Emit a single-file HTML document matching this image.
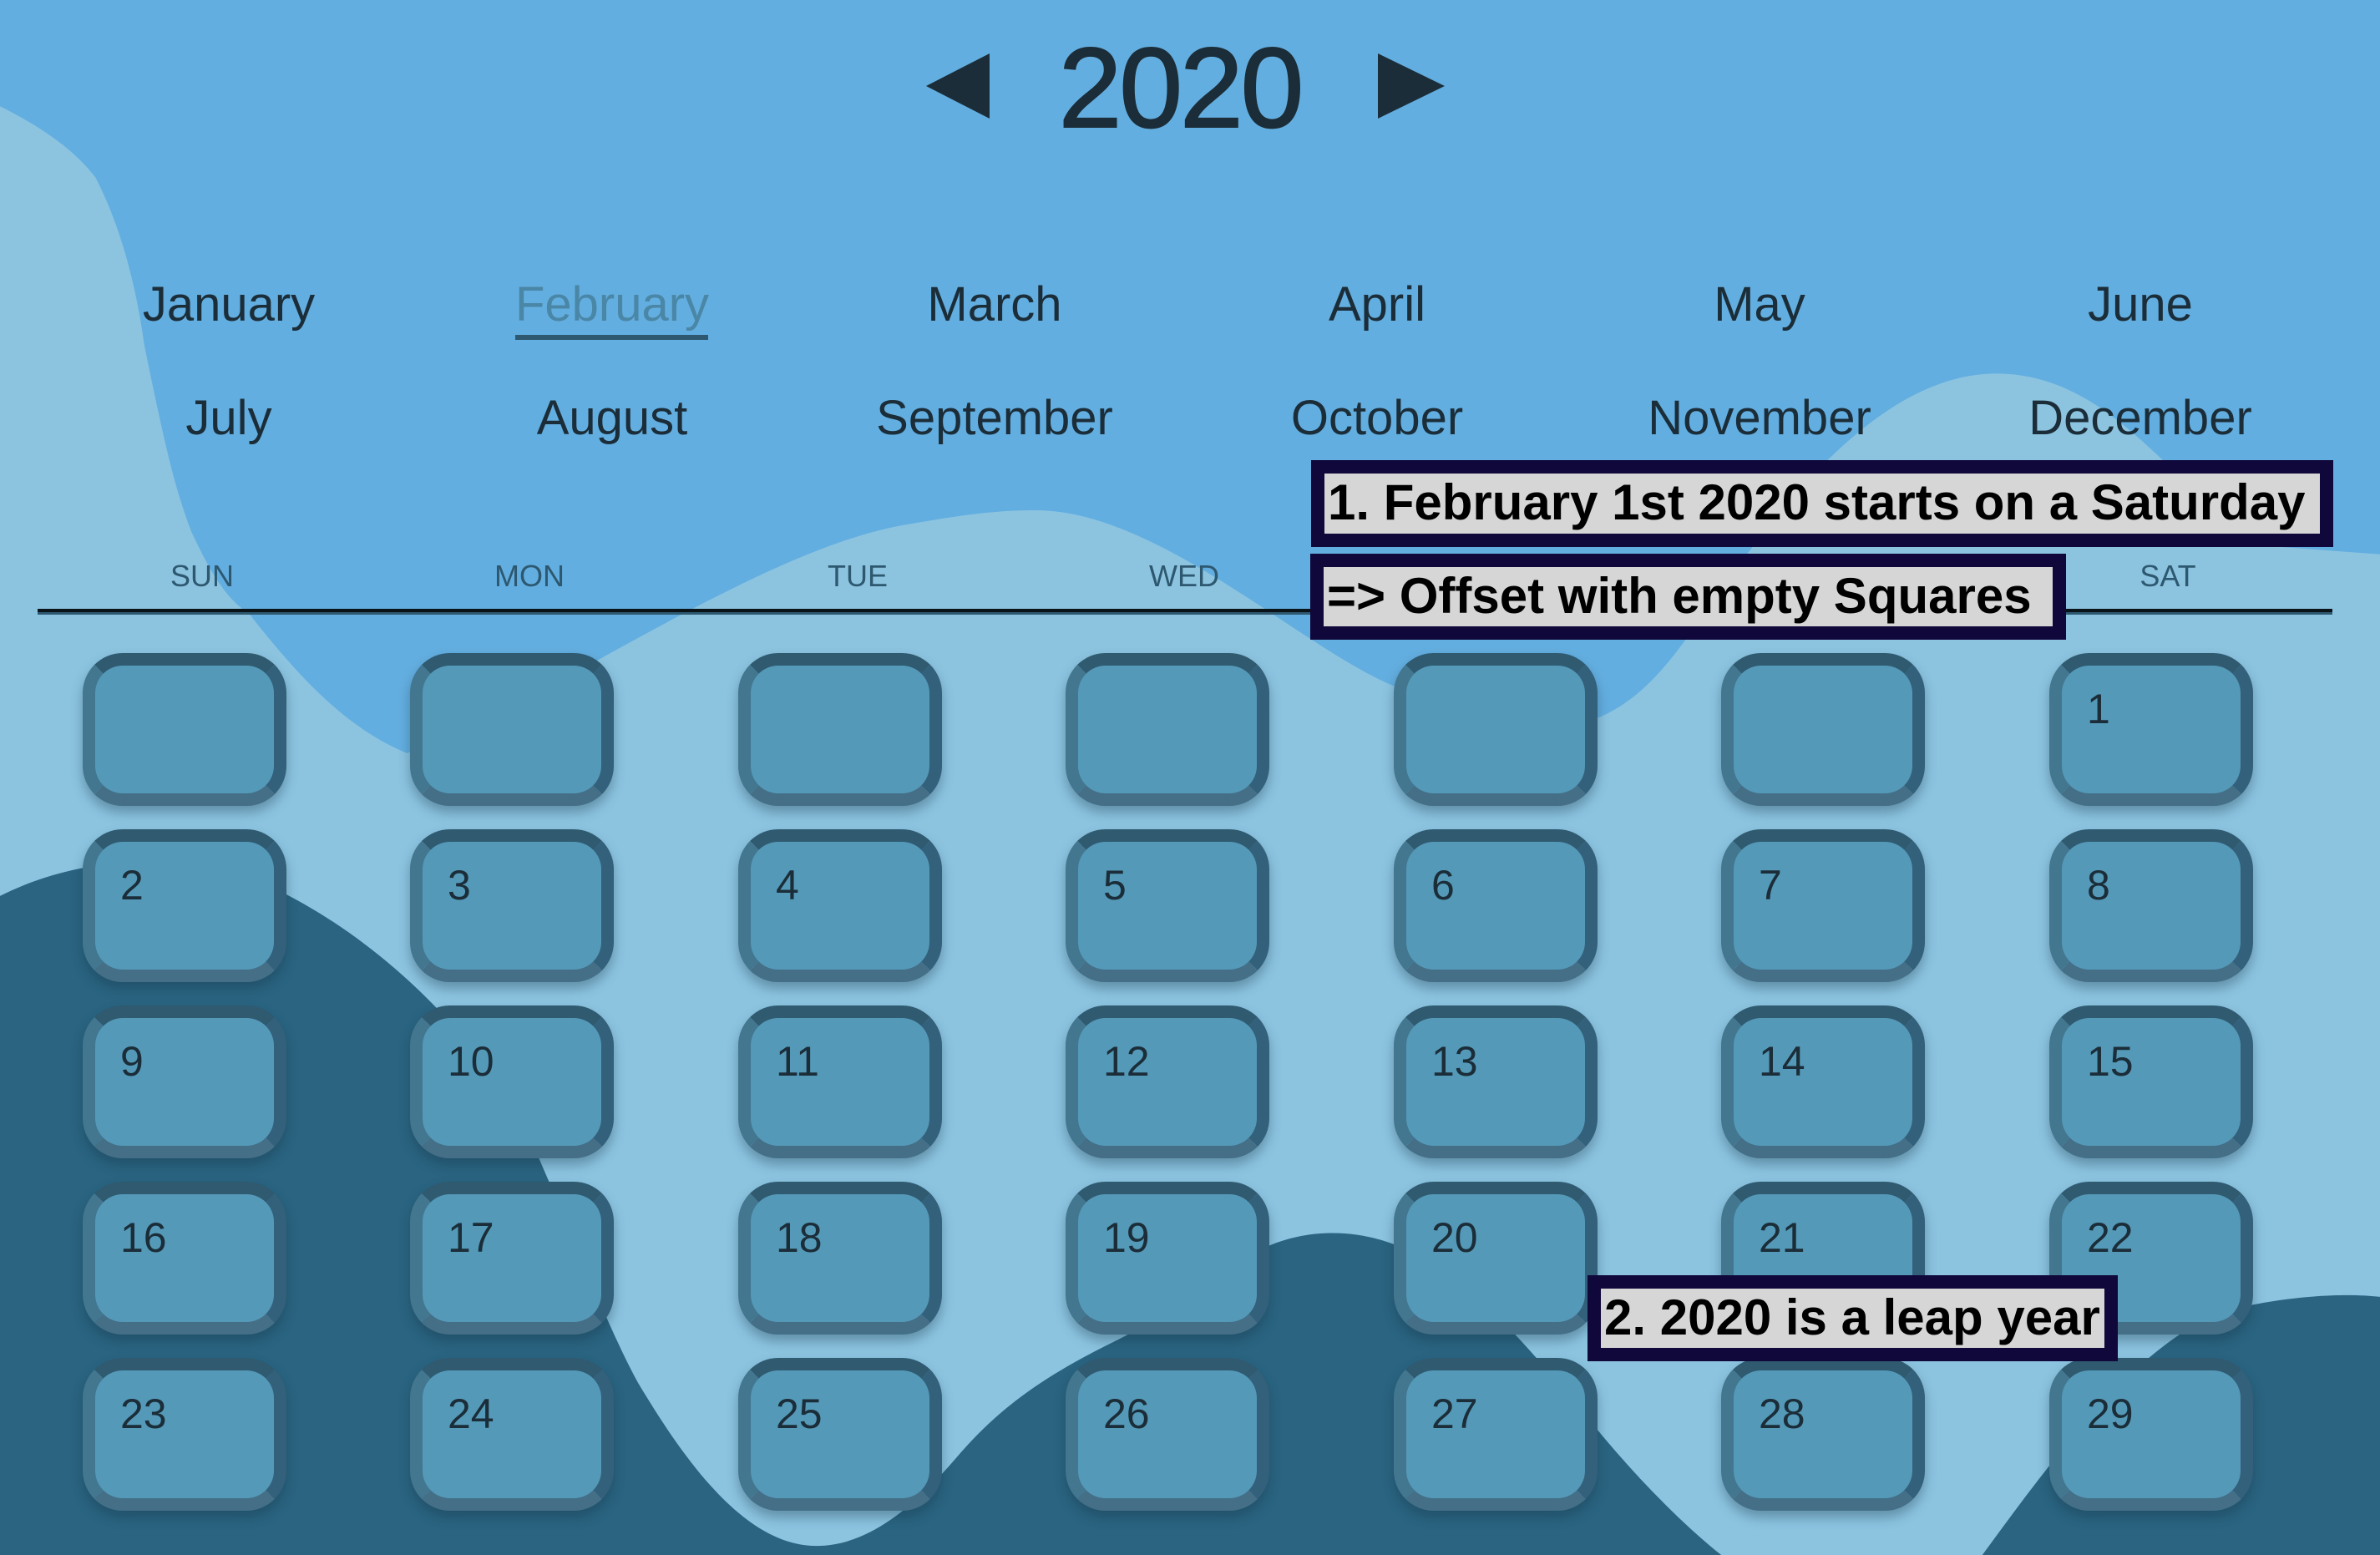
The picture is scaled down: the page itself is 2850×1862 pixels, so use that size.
<!DOCTYPE html>
<html><head><meta charset="utf-8"><style>
*{margin:0;padding:0;box-sizing:border-box}
html,body{width:2850px;height:1862px;overflow:hidden;background:#63aee0;font-family:"Liberation Sans",Arial,sans-serif}
#bg{position:absolute;left:0;top:0;width:2850px;height:1862px}
.abs{position:absolute}
.year{left:-12px;width:2850px;top:30px;text-align:center;font-size:136px;color:#1b2d38;line-height:150px;letter-spacing:-3px;-webkit-text-stroke:2px #1b2d38}
.m{position:absolute;width:400px;margin-left:-200px;text-align:center;font-size:58px;color:#1b2d38;line-height:70px}
.d{position:absolute;width:200px;margin-left:-100px;text-align:center;font-size:36px;color:#2d5870;line-height:40px}
.c{position:absolute;width:244px;height:183px;border-radius:48px;border:15px solid #3a657b;
 border-left-color:#43768f;border-bottom-color:#446f87;border-right-color:#33607a;border-top-color:#2f5a70;
 background:#5499b8;box-shadow:0 8px 14px rgba(20,50,70,.35);font-size:50px;color:#1b2d38;padding:24px 0 0 30px;line-height:56px}
.note{position:absolute;background:#d6d6d6;border:16px solid #10073a;font-weight:bold;color:#000;white-space:nowrap;line-height:70px;padding:0 4px;font-size:60px;overflow:hidden}
</style></head><body>
<svg id="bg" viewBox="0 0 1568 1024" preserveAspectRatio="none">
<path fill="#8cc4e0" d="M0,70 C30,85 50,100 63,117 C80,150 90,190 95,227 C110,300 115,320 126,350 C140,380 150,395 164,404 C200,450 230,480 268,496 C350,470 500,360 600,345 C640,338 660,336 682,336 C760,336 850,420 912,449 C960,470 1010,485 1047,475 C1090,460 1110,420 1140,380 C1190,310 1250,246 1315,246 C1400,246 1440,340 1500,360 L1568,365 L1568,1024 L0,1024 Z"/>
<path fill="#2a6480" d="M0,590 C50,565 110,560 170,580 C260,620 330,700 356,765 C380,820 400,873 420,910 C450,960 490,1018 538,1018 C570,1018 600,995 630,960 C660,925 690,905 737,882 C790,855 820,812 878,812 C950,812 1000,880 1052,941 C1080,975 1110,1005 1134,1024 L0,1024 Z"/>
<path fill="#2a6480" d="M1306,1024 C1360,950 1420,870 1480,860 C1520,852 1550,852 1568,854 L1568,1024 Z"/>
</svg>
<svg class="abs" style="left:0;top:0" width="2850" height="200">
<polygon fill="#1b2d38" points="1185,64 1185,142 1109,103"/>
<polygon fill="#1b2d38" points="1650,64 1650,142 1730,103"/>
</svg>
<div class="abs year">2020</div>
<div class="m" style="left:274px;top:330px">January</div>
<div class="m" style="left:733px;top:330px;color:#4a86a6">February</div>
<div class="abs" style="left:617px;top:401px;width:231px;height:6px;background:#2d5870"></div>
<div class="m" style="left:1191px;top:330px">March</div>
<div class="m" style="left:1649px;top:330px">April</div>
<div class="m" style="left:2107px;top:330px">May</div>
<div class="m" style="left:2563px;top:330px">June</div>
<div class="m" style="left:274px;top:466px">July</div>
<div class="m" style="left:733px;top:466px">August</div>
<div class="m" style="left:1191px;top:466px">September</div>
<div class="m" style="left:1649px;top:466px">October</div>
<div class="m" style="left:2107px;top:466px">November</div>
<div class="m" style="left:2563px;top:466px">December</div>
<div class="d" style="left:242px;top:670px">SUN</div>
<div class="d" style="left:634px;top:670px">MON</div>
<div class="d" style="left:1027px;top:670px">TUE</div>
<div class="d" style="left:1418px;top:670px">WED</div>
<div class="d" style="left:1811px;top:670px">THU</div>
<div class="d" style="left:2204px;top:670px">FRI</div>
<div class="d" style="left:2596px;top:670px">SAT</div>
<div class="abs" style="left:45px;top:729px;width:2748px;height:4px;background:#0a1418"></div>
<div class="abs" style="left:45px;top:733px;width:2748px;height:3px;background:#2d5870"></div>

<div class="c" style="left:99px;top:782px"></div>
<div class="c" style="left:491px;top:782px"></div>
<div class="c" style="left:884px;top:782px"></div>
<div class="c" style="left:1276px;top:782px"></div>
<div class="c" style="left:1669px;top:782px"></div>
<div class="c" style="left:2061px;top:782px"></div>
<div class="c" style="left:2454px;top:782px">1</div>

<div class="c" style="left:99px;top:993px">2</div>
<div class="c" style="left:491px;top:993px">3</div>
<div class="c" style="left:884px;top:993px">4</div>
<div class="c" style="left:1276px;top:993px">5</div>
<div class="c" style="left:1669px;top:993px">6</div>
<div class="c" style="left:2061px;top:993px">7</div>
<div class="c" style="left:2454px;top:993px">8</div>

<div class="c" style="left:99px;top:1204px">9</div>
<div class="c" style="left:491px;top:1204px">10</div>
<div class="c" style="left:884px;top:1204px">11</div>
<div class="c" style="left:1276px;top:1204px">12</div>
<div class="c" style="left:1669px;top:1204px">13</div>
<div class="c" style="left:2061px;top:1204px">14</div>
<div class="c" style="left:2454px;top:1204px">15</div>

<div class="c" style="left:99px;top:1415px">16</div>
<div class="c" style="left:491px;top:1415px">17</div>
<div class="c" style="left:884px;top:1415px">18</div>
<div class="c" style="left:1276px;top:1415px">19</div>
<div class="c" style="left:1669px;top:1415px">20</div>
<div class="c" style="left:2061px;top:1415px">21</div>
<div class="c" style="left:2454px;top:1415px">22</div>

<div class="c" style="left:99px;top:1626px">23</div>
<div class="c" style="left:491px;top:1626px">24</div>
<div class="c" style="left:884px;top:1626px">25</div>
<div class="c" style="left:1276px;top:1626px">26</div>
<div class="c" style="left:1669px;top:1626px">27</div>
<div class="c" style="left:2061px;top:1626px">28</div>
<div class="c" style="left:2454px;top:1626px">29</div>

<div class="note" style="left:1570px;top:551px;width:1224px;height:104px">1. February 1st 2020 starts on a Saturday</div>
<div class="note" style="left:1569px;top:663px;width:905px;height:103px">=&gt; Offset with empty Squares</div>
<div class="note" style="left:1901px;top:1527px;width:635px;height:103px">2. 2020 is a leap year</div>
</body></html>
